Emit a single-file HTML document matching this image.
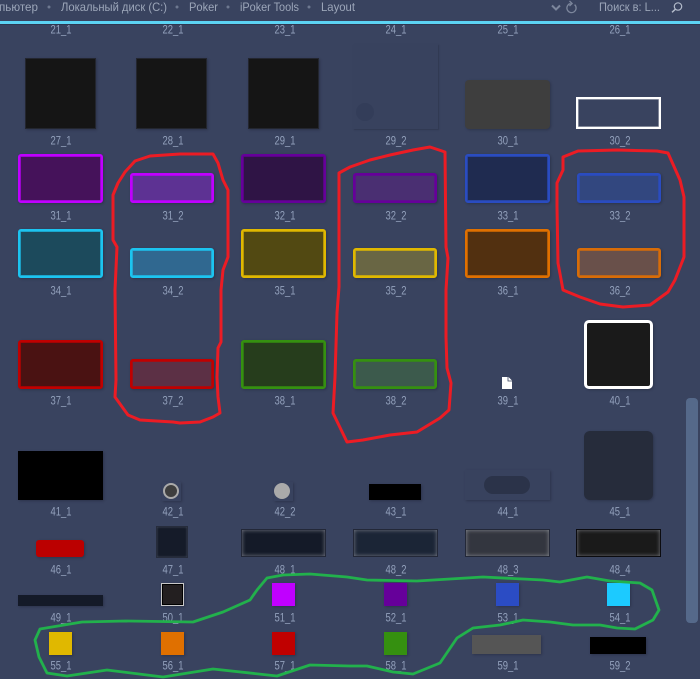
<!DOCTYPE html>
<html><head><meta charset="utf-8">
<style>
html,body{margin:0;padding:0;background:#39435f}
body{position:relative;width:700px;height:679px;overflow:hidden;font-family:"Liberation Sans","Noto Sans CJK SC",sans-serif}
.b{position:absolute;box-sizing:border-box;box-shadow:1px 1px 2px rgba(30,36,55,.45)}
.r{border-radius:3px;border-width:2px;border-style:solid}
svg{position:absolute;left:0;top:0}
text{font-family:"Liberation Sans","Noto Sans CJK SC",sans-serif}
.l{font-size:12px;fill:#93a1bc}
.t{font-size:12px;fill:#9ca6b9}
</style></head>
<body>
<div style="position:absolute;left:0;top:21px;width:700px;height:3px;background:#5cd3f3"></div>
<div style="position:absolute;left:0;top:24px;width:700px;height:1px;background:#2e3750"></div>

<div class="b" style="left:25px;top:58px;width:71px;height:71px;background:#151515;border:1px solid #23262f"></div>
<div class="b" style="left:136px;top:58px;width:71px;height:71px;background:#151515;border:1px solid #23262f"></div>
<div class="b" style="left:248px;top:58px;width:71px;height:71px;background:#151515;border:1px solid #23262f"></div>
<div class="b" style="left:353px;top:44px;width:85px;height:85px;background:#38425e;box-shadow:1px 1px 1px rgba(40,46,68,.5)"></div>
<div style="position:absolute;left:356px;top:103px;width:18px;height:18px;border-radius:50%;background:#333d59"></div>
<div class="b" style="left:465px;top:80px;width:85px;height:49px;background:#3e3e3e;border-radius:4px"></div>
<div class="b" style="left:576px;top:97px;width:85px;height:32px;border:2px solid #fff;box-shadow:inset 0 0 0 .6px rgba(255,255,255,.6)"></div>

<div class="b r" style="left:18px;top:154px;width:85px;height:49px;background:#45125a;border-color:#c000ff;box-shadow:inset 0 0 0 .7px #c000ff,1px 1px 2px rgba(30,36,55,.45)"></div>
<div class="b r" style="left:130px;top:173px;width:84px;height:30px;background:#5d3293;border-color:#c000ff;box-shadow:inset 0 0 0 .7px #c000ff,1px 1px 2px rgba(30,36,55,.45)"></div>
<div class="b r" style="left:241px;top:154px;width:85px;height:49px;background:#2f1445;border-color:#66009a;box-shadow:inset 0 0 0 .7px #66009a,1px 1px 2px rgba(30,36,55,.45)"></div>
<div class="b r" style="left:353px;top:173px;width:84px;height:30px;background:#4a2f72;border-color:#66009a;box-shadow:inset 0 0 0 .7px #66009a,1px 1px 2px rgba(30,36,55,.45)"></div>
<div class="b r" style="left:465px;top:154px;width:85px;height:49px;background:#1f2b50;border-color:#2a4cc0;box-shadow:inset 0 0 0 .7px #2a4cc0,1px 1px 2px rgba(30,36,55,.45)"></div>
<div class="b r" style="left:577px;top:173px;width:84px;height:30px;background:#32477f;border-color:#2a4cc0;box-shadow:inset 0 0 0 .7px #2a4cc0,1px 1px 2px rgba(30,36,55,.45)"></div>

<div class="b r" style="left:18px;top:229px;width:85px;height:49px;background:#1c4a5c;border-color:#1cc4f0;box-shadow:inset 0 0 0 .7px #1cc4f0,1px 1px 2px rgba(30,36,55,.45)"></div>
<div class="b r" style="left:130px;top:248px;width:84px;height:30px;background:#306890;border-color:#1cc4f0;box-shadow:inset 0 0 0 .7px #1cc4f0,1px 1px 2px rgba(30,36,55,.45)"></div>
<div class="b r" style="left:241px;top:229px;width:85px;height:49px;background:#524912;border-color:#e0b800;box-shadow:inset 0 0 0 .7px #e0b800,1px 1px 2px rgba(30,36,55,.45)"></div>
<div class="b r" style="left:353px;top:248px;width:84px;height:30px;background:#696644;border-color:#e0b800;box-shadow:inset 0 0 0 .7px #e0b800,1px 1px 2px rgba(30,36,55,.45)"></div>
<div class="b r" style="left:465px;top:229px;width:85px;height:49px;background:#523010;border-color:#e07000;box-shadow:inset 0 0 0 .7px #e07000,1px 1px 2px rgba(30,36,55,.45)"></div>
<div class="b r" style="left:577px;top:248px;width:84px;height:30px;background:#69504a;border-color:#d86c08;box-shadow:inset 0 0 0 .7px #d86c08,1px 1px 2px rgba(30,36,55,.45)"></div>

<div class="b r" style="left:18px;top:340px;width:85px;height:49px;background:#4a1212;border-color:#c00000;box-shadow:inset 0 0 0 .7px #c00000,1px 1px 2px rgba(30,36,55,.45)"></div>
<div class="b r" style="left:130px;top:359px;width:84px;height:30px;background:#5c3045;border-color:#c00000;box-shadow:inset 0 0 0 .7px #c00000,1px 1px 2px rgba(30,36,55,.45)"></div>
<div class="b r" style="left:241px;top:340px;width:85px;height:49px;background:#263d1c;border-color:#359010;box-shadow:inset 0 0 0 .7px #359010,1px 1px 2px rgba(30,36,55,.45)"></div>
<div class="b r" style="left:353px;top:359px;width:84px;height:30px;background:#3c5a4c;border-color:#359010;box-shadow:inset 0 0 0 .7px #359010,1px 1px 2px rgba(30,36,55,.45)"></div>
<div class="b" style="left:584px;top:320px;width:69px;height:69px;background:#1a1a1a;border:3px solid #fff;border-radius:5px"></div>

<div class="b" style="left:18px;top:451px;width:85px;height:49px;background:#000"></div>
<div class="b" style="left:162px;top:482px;width:19px;height:19px;background:#38425e"></div>
<div style="position:absolute;left:162.5px;top:483px;width:16px;height:16px;box-sizing:border-box;border-radius:50%;background:#3e3e3e;border:2px solid #aaa"></div>
<div class="b" style="left:274px;top:482px;width:19px;height:19px;background:#38425e"></div>
<div style="position:absolute;left:274px;top:483px;width:16px;height:16px;border-radius:50%;background:#aaa"></div>
<div class="b" style="left:369px;top:484px;width:52px;height:16px;background:#000"></div>
<div class="b" style="left:465px;top:470px;width:85px;height:30px;background:#38425e"></div>
<div style="position:absolute;left:484px;top:476px;width:46px;height:18px;border-radius:9px;background:#2b3349"></div>
<div class="b" style="left:584px;top:431px;width:69px;height:69px;background:#262c3b;border-radius:6px"></div>

<div class="b" style="left:36px;top:540px;width:48px;height:17px;background:#bb0000;border-radius:3px"></div>
<div class="b" style="left:156px;top:526px;width:32px;height:32px;background:#151b29;border:1px solid #262c3c;box-shadow:inset 0 0 2px #454b5c"></div>
<div class="b" style="left:241px;top:529px;width:85px;height:28px;background:#141a28;border:1px solid #232838;box-shadow:inset 0 0 4px #787c88"></div>
<div class="b" style="left:353px;top:529px;width:85px;height:28px;background:#1b2536;border:1px solid #232838;box-shadow:inset 0 0 4px #787c88"></div>
<div class="b" style="left:465px;top:529px;width:85px;height:28px;background:#33363f;border:1px solid #232838;box-shadow:inset 0 0 4px #8a8d94"></div>
<div class="b" style="left:576px;top:529px;width:85px;height:28px;background:#1a1a1a;border:1px solid #0c0c10;box-shadow:inset 0 0 4px #75777c"></div>

<div class="b" style="left:18px;top:595px;width:85px;height:11px;background:#141a28"></div>
<div class="b" style="left:161px;top:583px;width:23px;height:23px;background:#231f20;border:1px solid #c8c8c8;outline:1px solid #000;outline-offset:-2px"></div>
<div class="b" style="left:272px;top:583px;width:23px;height:23px;background:#c000ff"></div>
<div class="b" style="left:384px;top:583px;width:23px;height:23px;background:#66009a"></div>
<div class="b" style="left:496px;top:583px;width:23px;height:23px;background:#2b4cc4"></div>
<div class="b" style="left:607px;top:583px;width:23px;height:23px;background:#1ccaff"></div>
<div class="b" style="left:49px;top:632px;width:23px;height:23px;background:#e0b800"></div>
<div class="b" style="left:161px;top:632px;width:23px;height:23px;background:#e07000"></div>
<div class="b" style="left:272px;top:632px;width:23px;height:23px;background:#c00000"></div>
<div class="b" style="left:384px;top:632px;width:23px;height:23px;background:#359010"></div>
<div class="b" style="left:472px;top:635px;width:69px;height:19px;background:#555"></div>
<div class="b" style="left:590px;top:637px;width:56px;height:17px;background:#000"></div>

<div style="position:absolute;left:686px;top:398px;width:12px;height:225px;border-radius:4px;background:#55698a"></div>

<svg width="700" height="679" viewBox="0 0 700 679" xmlns="http://www.w3.org/2000/svg">
<text class="t" x="-1" y="11" textLength="39" lengthAdjust="spacingAndGlyphs">пьютер</text>
<text class="t" x="61" y="11" textLength="106" lengthAdjust="spacingAndGlyphs">Локальный диск (C:)</text>
<text class="t" x="189" y="11" textLength="29" lengthAdjust="spacingAndGlyphs">Poker</text>
<text class="t" x="240" y="11" textLength="59" lengthAdjust="spacingAndGlyphs">iPoker Tools</text>
<text class="t" x="321" y="11" textLength="34" lengthAdjust="spacingAndGlyphs">Layout</text>
<text class="t" x="599" y="11" textLength="61" lengthAdjust="spacingAndGlyphs">Поиск в: L...</text>
<g fill="#6d7890"><circle cx="49" cy="7" r="1.5"/><circle cx="177" cy="7" r="1.5"/><circle cx="228" cy="7" r="1.5"/><circle cx="309" cy="7" r="1.5"/></g>
<path d="M552 5.5l4 4 4-4" fill="none" stroke="#7c869c" stroke-width="2"/>
<path d="M574.6 4.6a4.6 4.6 0 1 1-4-1.1M569.5 1l2.6 2.5-2.6 2.5" fill="none" stroke="#7c869c" stroke-width="1.3"/>
<circle cx="678" cy="6.5" r="3.7" fill="none" stroke="#b4bccb" stroke-width="1.2"/><path d="M675.3 9.3l-3.3 3" stroke="#b4bccb" stroke-width="1.4"/>
<path d="M502 377h6.5l3.5 3.5V389h-10z" fill="#fff"/><path d="M508 377v4h4" fill="none" stroke="#39435f" stroke-width=".8"/>

<g>
<text class="l" text-anchor="middle" x="61" y="33.5" textLength="21" lengthAdjust="spacingAndGlyphs">21_1</text>
<text class="l" text-anchor="middle" x="173" y="33.5" textLength="21" lengthAdjust="spacingAndGlyphs">22_1</text>
<text class="l" text-anchor="middle" x="285" y="33.5" textLength="21" lengthAdjust="spacingAndGlyphs">23_1</text>
<text class="l" text-anchor="middle" x="396" y="33.5" textLength="21" lengthAdjust="spacingAndGlyphs">24_1</text>
<text class="l" text-anchor="middle" x="508" y="33.5" textLength="21" lengthAdjust="spacingAndGlyphs">25_1</text>
<text class="l" text-anchor="middle" x="620" y="33.5" textLength="21" lengthAdjust="spacingAndGlyphs">26_1</text>

<text class="l" text-anchor="middle" x="61" y="144.5" textLength="21" lengthAdjust="spacingAndGlyphs">27_1</text>
<text class="l" text-anchor="middle" x="173" y="144.5" textLength="21" lengthAdjust="spacingAndGlyphs">28_1</text>
<text class="l" text-anchor="middle" x="285" y="144.5" textLength="21" lengthAdjust="spacingAndGlyphs">29_1</text>
<text class="l" text-anchor="middle" x="396" y="144.5" textLength="21" lengthAdjust="spacingAndGlyphs">29_2</text>
<text class="l" text-anchor="middle" x="508" y="144.5" textLength="21" lengthAdjust="spacingAndGlyphs">30_1</text>
<text class="l" text-anchor="middle" x="620" y="144.5" textLength="21" lengthAdjust="spacingAndGlyphs">30_2</text>

<text class="l" text-anchor="middle" x="61" y="219.5" textLength="21" lengthAdjust="spacingAndGlyphs">31_1</text>
<text class="l" text-anchor="middle" x="173" y="219.5" textLength="21" lengthAdjust="spacingAndGlyphs">31_2</text>
<text class="l" text-anchor="middle" x="285" y="219.5" textLength="21" lengthAdjust="spacingAndGlyphs">32_1</text>
<text class="l" text-anchor="middle" x="396" y="219.5" textLength="21" lengthAdjust="spacingAndGlyphs">32_2</text>
<text class="l" text-anchor="middle" x="508" y="219.5" textLength="21" lengthAdjust="spacingAndGlyphs">33_1</text>
<text class="l" text-anchor="middle" x="620" y="219.5" textLength="21" lengthAdjust="spacingAndGlyphs">33_2</text>

<text class="l" text-anchor="middle" x="61" y="294.5" textLength="21" lengthAdjust="spacingAndGlyphs">34_1</text>
<text class="l" text-anchor="middle" x="173" y="294.5" textLength="21" lengthAdjust="spacingAndGlyphs">34_2</text>
<text class="l" text-anchor="middle" x="285" y="294.5" textLength="21" lengthAdjust="spacingAndGlyphs">35_1</text>
<text class="l" text-anchor="middle" x="396" y="294.5" textLength="21" lengthAdjust="spacingAndGlyphs">35_2</text>
<text class="l" text-anchor="middle" x="508" y="294.5" textLength="21" lengthAdjust="spacingAndGlyphs">36_1</text>
<text class="l" text-anchor="middle" x="620" y="294.5" textLength="21" lengthAdjust="spacingAndGlyphs">36_2</text>

<text class="l" text-anchor="middle" x="61" y="404.5" textLength="21" lengthAdjust="spacingAndGlyphs">37_1</text>
<text class="l" text-anchor="middle" x="173" y="404.5" textLength="21" lengthAdjust="spacingAndGlyphs">37_2</text>
<text class="l" text-anchor="middle" x="285" y="404.5" textLength="21" lengthAdjust="spacingAndGlyphs">38_1</text>
<text class="l" text-anchor="middle" x="396" y="404.5" textLength="21" lengthAdjust="spacingAndGlyphs">38_2</text>
<text class="l" text-anchor="middle" x="508" y="404.5" textLength="21" lengthAdjust="spacingAndGlyphs">39_1</text>
<text class="l" text-anchor="middle" x="620" y="404.5" textLength="21" lengthAdjust="spacingAndGlyphs">40_1</text>

<text class="l" text-anchor="middle" x="61" y="515.5" textLength="21" lengthAdjust="spacingAndGlyphs">41_1</text>
<text class="l" text-anchor="middle" x="173" y="515.5" textLength="21" lengthAdjust="spacingAndGlyphs">42_1</text>
<text class="l" text-anchor="middle" x="285" y="515.5" textLength="21" lengthAdjust="spacingAndGlyphs">42_2</text>
<text class="l" text-anchor="middle" x="396" y="515.5" textLength="21" lengthAdjust="spacingAndGlyphs">43_1</text>
<text class="l" text-anchor="middle" x="508" y="515.5" textLength="21" lengthAdjust="spacingAndGlyphs">44_1</text>
<text class="l" text-anchor="middle" x="620" y="515.5" textLength="21" lengthAdjust="spacingAndGlyphs">45_1</text>

<text class="l" text-anchor="middle" x="61" y="573.5" textLength="21" lengthAdjust="spacingAndGlyphs">46_1</text>
<text class="l" text-anchor="middle" x="173" y="573.5" textLength="21" lengthAdjust="spacingAndGlyphs">47_1</text>
<text class="l" text-anchor="middle" x="285" y="573.5" textLength="21" lengthAdjust="spacingAndGlyphs">48_1</text>
<text class="l" text-anchor="middle" x="396" y="573.5" textLength="21" lengthAdjust="spacingAndGlyphs">48_2</text>
<text class="l" text-anchor="middle" x="508" y="573.5" textLength="21" lengthAdjust="spacingAndGlyphs">48_3</text>
<text class="l" text-anchor="middle" x="620" y="573.5" textLength="21" lengthAdjust="spacingAndGlyphs">48_4</text>

<text class="l" text-anchor="middle" x="61" y="621.5" textLength="21" lengthAdjust="spacingAndGlyphs">49_1</text>
<text class="l" text-anchor="middle" x="173" y="621.5" textLength="21" lengthAdjust="spacingAndGlyphs">50_1</text>
<text class="l" text-anchor="middle" x="285" y="621.5" textLength="21" lengthAdjust="spacingAndGlyphs">51_1</text>
<text class="l" text-anchor="middle" x="396" y="621.5" textLength="21" lengthAdjust="spacingAndGlyphs">52_1</text>
<text class="l" text-anchor="middle" x="508" y="621.5" textLength="21" lengthAdjust="spacingAndGlyphs">53_1</text>
<text class="l" text-anchor="middle" x="620" y="621.5" textLength="21" lengthAdjust="spacingAndGlyphs">54_1</text>

<text class="l" text-anchor="middle" x="61" y="669.5" textLength="21" lengthAdjust="spacingAndGlyphs">55_1</text>
<text class="l" text-anchor="middle" x="173" y="669.5" textLength="21" lengthAdjust="spacingAndGlyphs">56_1</text>
<text class="l" text-anchor="middle" x="285" y="669.5" textLength="21" lengthAdjust="spacingAndGlyphs">57_1</text>
<text class="l" text-anchor="middle" x="396" y="669.5" textLength="21" lengthAdjust="spacingAndGlyphs">58_1</text>
<text class="l" text-anchor="middle" x="508" y="669.5" textLength="21" lengthAdjust="spacingAndGlyphs">59_1</text>
<text class="l" text-anchor="middle" x="620" y="669.5" textLength="21" lengthAdjust="spacingAndGlyphs">59_2</text>
</g>

<g fill="none" stroke="#ec1c24" stroke-width="3" stroke-linejoin="round" stroke-linecap="round">
<path d="M135 161L150 156L180 154L213 154L218 163L223 180L228 190L228 257L223 270L221 290L221 342L218 348L217 377L218 397L220 413L213 417L200 422L180 423L173 422L140 420L128 415L115 397L116 380L115 290L117 247L113 240L113 195L118 183L125 172Z"/>
<path d="M339 173L350 167L370 160L390 155L413 150L430 147L445 152L446 247L448 258L446 290L446 337L447 368L451 383L449 410L440 418L417 432L390 435L363 440L347 442L333 413L335 377L337 313L339 287Z"/>
<path d="M563 157L578 151L617 150L657 151L668 153L680 180L684 197L684 257L675 280L668 292L650 305L623 307L600 304L580 297L563 290L558 263L557 207L557 183L563 170Z"/>
</g>
<path d="M35 640L40 629L82 622L125 621L193 622L223 612L250 600L257 590L267 578L283 575L310 574L347 577L367 580L417 581L483 577L543 580L560 582L587 577L610 581L640 583L652 590L659 610L653 620L635 629L617 628L600 625L573 625L550 622L523 620L500 625L473 628L457 638L440 663L413 674L393 672L367 666L350 666L310 665L277 676L213 669L163 677L107 670L67 676L47 673L39 657Z" fill="none" stroke="#22b14c" stroke-width="2.8" stroke-linejoin="round"/>
</svg>
</body></html>
